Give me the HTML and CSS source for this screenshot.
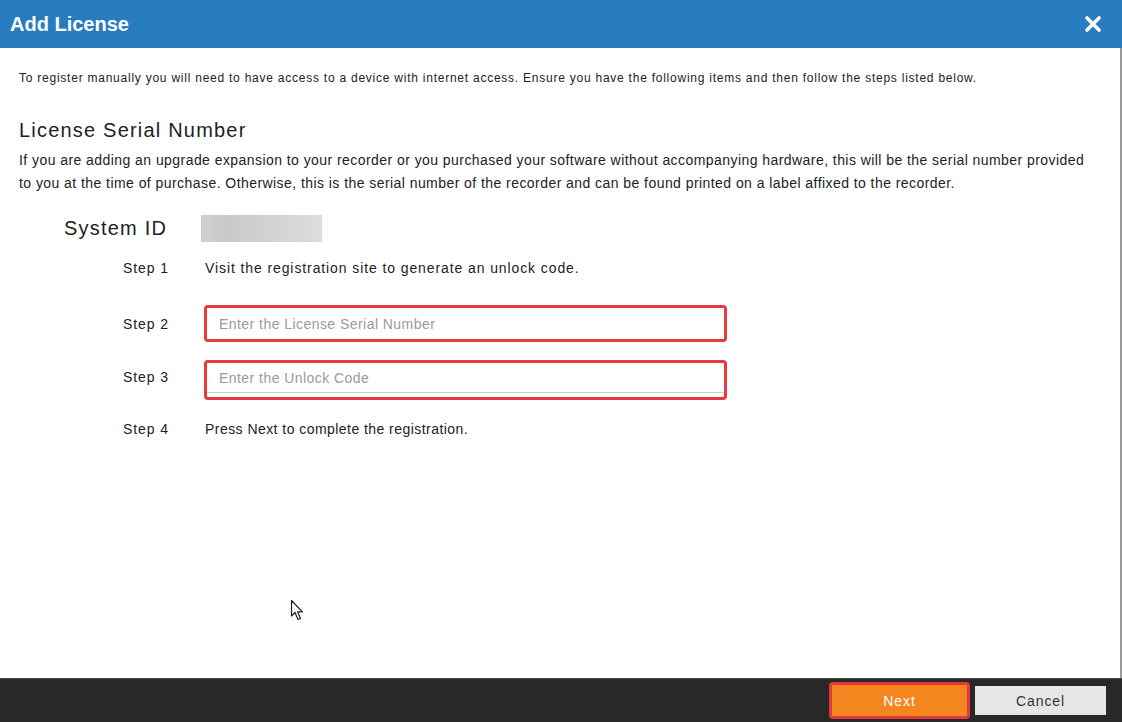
FILE: index.html
```html
<!DOCTYPE html>
<html lang="en">
<head>
    <meta charset="UTF-8">
    <title>Add License</title>
    <link rel="stylesheet" href="styles.css">
</head>
<body>
    <div class="dialog">
        <div class="dialog-header">
            <h1 class="dialog-title">Add License</h1>
            <button class="close-btn" aria-label="Close">
                <svg width="18" height="18" viewBox="0 0 18 18">
                    <path d="M3 3 L15 15 M15 3 L3 15" stroke="#fff" stroke-width="3.6" stroke-linecap="round"/>
                </svg>
            </button>
        </div>

        <div class="dialog-body">
            <p class="intro">To register manually you will need to have access to a device with internet access. Ensure you have the following items and then follow the steps listed below.</p>

            <h2 class="section-title">License Serial Number</h2>
            <p class="section-text">If you are adding an upgrade expansion to your recorder or you purchased your software without accompanying hardware, this will be the serial number provided to you at the time of purchase. Otherwise, this is the serial number of the recorder and can be found printed on a label affixed to the recorder.</p>

            <div class="system-row">
                <span class="system-label">System ID</span>
                <span class="system-value"></span>
            </div>

            <div class="steps">
                <div class="step step-1">
                    <span class="step-label">Step 1</span>
                    <span class="step-text">Visit the registration site to generate an unlock code.</span>
                </div>
                <div class="step step-2">
                    <span class="step-label">Step 2</span>
                    <div class="field">
                        <input type="text" placeholder="Enter the License Serial Number">
                    </div>
                </div>
                <div class="step step-3">
                    <span class="step-label">Step 3</span>
                    <div class="field field-code">
                        <input type="text" placeholder="Enter the Unlock Code">
                    </div>
                </div>
                <div class="step step-4">
                    <span class="step-label">Step 4</span>
                    <span class="step-text">Press Next to complete the registration.</span>
                </div>
            </div>

            <!-- mouse pointer from the screenshot -->
            <svg class="cursor" width="16" height="24" viewBox="0 0 16 24">
                <path d="M1.5 1.5 L1.5 17 L5 13.5 L8 20.5 L10.5 19.5 L7.6 12.8 L12.5 12.8 Z" fill="#fff" stroke="#222" stroke-width="1.2" stroke-linejoin="round"/>
            </svg>
        </div>

        <div class="dialog-footer">
            <button class="btn btn-next">Next</button>
            <button class="btn btn-cancel">Cancel</button>
        </div>
    </div>
</body>
</html>
```

FILE: styles.css
```css
body {
    margin: 0;
    font-family: "Liberation Sans", Arial, sans-serif;
    color: #222;
    background: #fff;
}
.dialog {
    display: flex;
    flex-direction: column;
    height: 722px;
    width: 1122px;
}
.dialog-header {
    background-color: #277bbf;
    height: 48px;
    display: flex;
    align-items: center;
    justify-content: space-between;
    padding: 0 20px 0 10px;
    flex-shrink: 0;
}
.dialog-title {
    margin: 0;
    font-size: 20px;
    font-weight: bold;
    color: #fff;
    line-height: 24px;
}
.close-btn {
    background: none;
    border: none;
    padding: 0;
    width: 18px;
    height: 18px;
    cursor: pointer;
    display: flex;
}
.dialog-body {
    position: relative;
    flex: 1;
    padding: 22px 20px 0 19px;
    border-right: 2px solid #9a9a9a;
}
.intro {
    margin: 0;
    font-size: 12px;
    line-height: 16px;
    letter-spacing: 0.76px;
}
.section-title {
    margin: 32px 0 0;
    font-size: 20px;
    font-weight: normal;
    line-height: 24px;
    letter-spacing: 1.2px;
}
.section-text {
    margin: 7px 0 0;
    font-size: 14px;
    line-height: 23px;
    letter-spacing: 0.44px;
}
.system-row {
    display: flex;
    align-items: center;
    margin-top: 20px;
    height: 27px;
}
.system-label {
    font-size: 20px;
    width: 137px;
    padding-left: 45px;
    letter-spacing: 1.2px;
}
.system-value {
    width: 121px;
    height: 27px;
    background: linear-gradient(90deg, #d2d2d2, #c9c9c9 20%, #d3d3d3 60%, #dcdddc);
}
.steps {
    display: flex;
    flex-direction: column;
    padding-left: 104px;
    font-size: 14px;
    letter-spacing: 0.9px;
}
.step {
    display: flex;
    align-items: center;
}
.step-label {
    width: 82px;
}
.step-1 {
    height: 27px;
    margin-top: 12px;
}
.step-2 {
    margin-top: 24px;
}
.step-3 {
    margin-top: 18px;
}
.step-3 .step-label {
    margin-top: -6px;
}
.step-4 {
    height: 27px;
    margin-top: 15px;
}
.step-4 .step-text {
    letter-spacing: 0.45px;
}
.field {
    width: 517px;
    height: 31px;
    border: 3px solid #e63a3d;
    border-radius: 4px;
    margin-left: -1px;
    display: flex;
}
.field-code {
    height: 34px;
}
.field input {
    flex: 1;
    border: none;
    outline: none;
    padding: 0 0 0 12px;
    font-family: "Liberation Sans", Arial, sans-serif;
    font-size: 14px;
    letter-spacing: 0.45px;
    color: #333;
    background: #fff;
}
.field-code input {
    border-bottom: 1px solid #cfcfd4;
    margin-bottom: 4px;
}
.field input::placeholder {
    color: #9a9a9a;
}
.cursor {
    position: absolute;
    left: 290px;
    top: 551px;
}
.dialog-footer {
    height: 43px;
    flex-shrink: 0;
    background-color: #282828;
    border-top: 1px solid #4a4a4a;
    display: flex;
    align-items: center;
    justify-content: flex-end;
    padding-right: 16px;
    gap: 5px;
}
.btn {
    font-family: "Liberation Sans", Arial, sans-serif;
    font-size: 14px;
    letter-spacing: 0.9px;
    cursor: pointer;
}
.btn-next {
    width: 141px;
    height: 37px;
    background-color: #f5861f;
    border: 3px solid #e23a3c;
    border-radius: 4px;
    color: #fff;
}
.btn-cancel {
    width: 131px;
    height: 29px;
    background-color: #e6e6e6;
    border: none;
    color: #333;
}
```
